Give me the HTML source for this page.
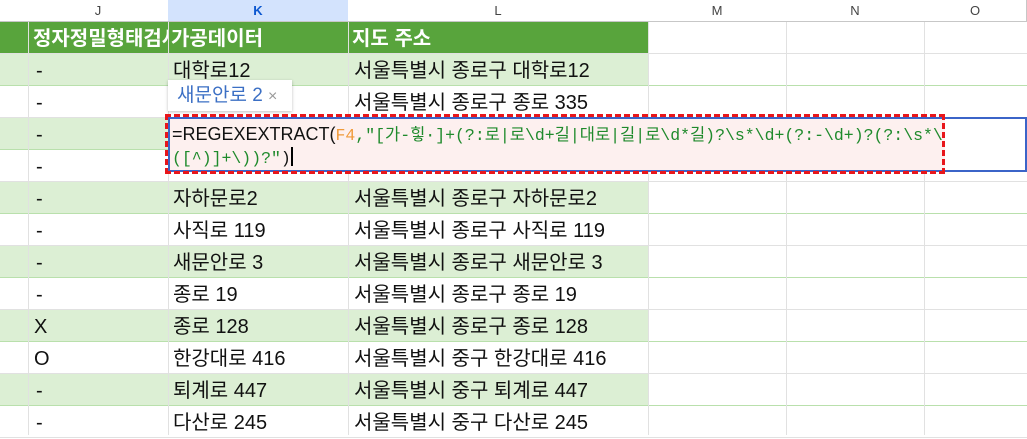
<!DOCTYPE html>
<html><head><meta charset="utf-8"><style>
body{margin:0;width:1027px;height:435px;overflow:hidden;background:#fff;font-family:"Liberation Sans","Noto Sans CJK KR",sans-serif;position:relative}
.a{position:absolute}
.ch{top:0;height:22px;background:#fff;border-bottom:1px solid #c7c7c7;font-size:13px;color:#444;text-align:center;line-height:22px;box-sizing:border-box;border-right:1px solid #c7c7c7}
.row{position:absolute;left:0;width:1027px;height:32px;box-sizing:border-box;border-bottom:1px solid #e1e1e1}
.g{background:linear-gradient(to right,#dcefd4 0,#dcefd4 648px,#fff 648px);border-bottom-color:#b9e0ac}
.row span{position:absolute;top:1px;line-height:32px;font-size:20px;color:#111;white-space:nowrap}
.v{position:absolute;top:22px;bottom:0;width:1px;background:#e1e1e1}
</style></head><body>
<div class="a ch" style="left:0;width:29px"></div>
<div class="a ch" style="left:28px;width:141px">J</div>
<div class="a ch" style="left:168px;width:181px;background:#d3e3fd;color:#0b57d0;font-weight:bold">K</div>
<div class="a ch" style="left:348px;width:301px">L</div>
<div class="a ch" style="left:648px;width:139px">M</div>
<div class="a ch" style="left:786px;width:139px">N</div>
<div class="a ch" style="left:924px;width:103px">O</div>

<div class="row" style="top:22px;height:32px;background:linear-gradient(to right,#58a43c 0,#58a43c 648px,#fff 648px)"><span style="left:33px;width:135px;overflow:hidden;color:#fff;font-weight:bold">정자정밀형태검사</span><span style="left:171px;color:#fff;font-weight:bold">가공데이터</span><span style="left:352px;color:#fff;font-weight:bold">지도 주소</span></div>

<div class="row g" style="top:54px"><span style="left:36px">-</span><span style="left:173px">대학로12</span><span style="left:354px">서울특별시 종로구 대학로12</span></div>
<div class="row" style="top:86px"><span style="left:36px">-</span><span style="left:354px">서울특별시 종로구 종로 335</span></div>
<div class="row g" style="top:118px"><span style="left:36px">-</span></div>
<div class="row" style="top:150px"><span style="left:36px">-</span></div>
<div class="row g" style="top:182px"><span style="left:36px">-</span><span style="left:173px">자하문로2</span><span style="left:354px">서울특별시 종로구 자하문로2</span></div>
<div class="row" style="top:214px"><span style="left:36px">-</span><span style="left:173px">사직로 119</span><span style="left:354px">서울특별시 종로구 사직로 119</span></div>
<div class="row g" style="top:246px"><span style="left:36px">-</span><span style="left:173px">새문안로 3</span><span style="left:354px">서울특별시 종로구 새문안로 3</span></div>
<div class="row" style="top:278px"><span style="left:36px">-</span><span style="left:173px">종로 19</span><span style="left:354px">서울특별시 종로구 종로 19</span></div>
<div class="row g" style="top:310px"><span style="left:34px">X</span><span style="left:173px">종로 128</span><span style="left:354px">서울특별시 종로구 종로 128</span></div>
<div class="row" style="top:342px"><span style="left:34px">O</span><span style="left:173px">한강대로 416</span><span style="left:354px">서울특별시 중구 한강대로 416</span></div>
<div class="row g" style="top:374px"><span style="left:36px">-</span><span style="left:173px">퇴계로 447</span><span style="left:354px">서울특별시 중구 퇴계로 447</span></div>
<div class="row" style="top:406px"><span style="left:36px">-</span><span style="left:173px">다산로 245</span><span style="left:354px">서울특별시 중구 다산로 245</span></div>

<div class="v" style="left:28px"></div><div class="v" style="left:168px"></div><div class="v" style="left:348px"></div><div class="v" style="left:648px"></div><div class="v" style="left:786px"></div><div class="v" style="left:924px"></div>

<div class="a" style="left:168px;top:80px;width:124px;height:31px;background:#fff;box-shadow:0 1px 3px rgba(0,0,0,.25);font-size:19px;line-height:31px;color:#3b6fc4;padding-left:9px;box-sizing:border-box;white-space:nowrap">새문안로 2 <span style="color:#999;font-size:16px">×</span></div>

<div class="a" style="left:168px;top:117px;width:859px;height:55px;box-sizing:border-box;border:2px solid #3b64c8;background:linear-gradient(to right,#fdf0ef 0,#fdf0ef 775px,#fff 775px)"></div>
<div class="a" style="left:165px;top:114px;width:780px;height:60px;box-sizing:border-box;border:3px dashed #e8161b"></div>
<div class="a" style="left:172px;top:123px;font-size:16.5px;line-height:23px;white-space:pre;font-family:'Liberation Mono','Noto Sans CJK KR',monospace;color:#1f8a2c"><span style="font-family:'Liberation Sans',sans-serif;color:#111;font-size:18px">=REGEXEXTRACT(</span><span style="color:#f09a3a">F4</span>,"[가-힣·]+(?:로|로\d+길|대로|길|로\d*길)?\s*\d+(?:-\d+)?(?:\s*\
([^)]+\))?"<span style="color:#111">)</span><span style="display:inline-block;width:2px;height:19px;background:#000;vertical-align:-3px"></span></div>
</body></html>
